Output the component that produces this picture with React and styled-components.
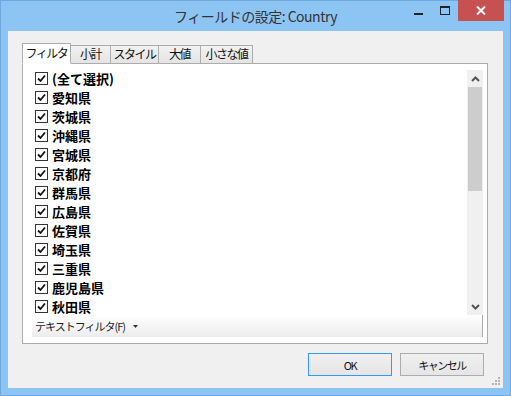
import React from 'react';
import styled, { createGlobalStyle } from 'styled-components';

const GlobalStyle = createGlobalStyle`
  html, body {
    margin: 0;
    padding: 0;
    background: #8cc4f4;
  }
  body {
    font-family: "Noto Sans CJK JP", "Noto Sans", sans-serif;
  }
`;

const Window = styled.div`
  width: 511px;
  height: 396px;
  box-sizing: border-box;
  border: 1px solid #6fa8dc;
  background: #8cc4f4;
  padding: 0 7px 7px;
  display: flex;
  flex-direction: column;
`;

const TitleBar = styled.div`
  height: 30px;
  display: grid;
  grid-template-columns: 1fr auto 1fr;
  align-items: center;
`;

const Title = styled.div`
  grid-column: 2;
  font-size: 14px;
  letter-spacing: -0.5px;
  color: #333;
  padding-bottom: 1px;
  white-space: nowrap;
`;

const Controls = styled.div`
  grid-column: 3;
  justify-self: end;
  align-self: start;
  display: flex;
  margin-right: -1px;
  margin-top: -1px;
`;

const CtrlButton = styled.div`
  width: ${p => p.$w}px;
  height: 21px;
  display: flex;
  align-items: center;
  justify-content: center;
  background: ${p => (p.$close ? '#c75050' : 'transparent')};
`;

const Client = styled.div`
  flex: 1;
  position: relative;
  background: #f0f0f0;
  padding: 12px 15px 0 14px;
  display: flex;
  flex-direction: column;
`;

const TabRow = styled.div`
  display: flex;
  align-items: flex-end;
  height: 21px;
  position: relative;
  z-index: 1;
  margin-bottom: -1px;
`;

const Tab = styled.div`
  box-sizing: border-box;
  width: ${p => p.$w}px;
  height: ${p => (p.$active ? 21 : 19)}px;
  margin-left: ${p => (p.$first ? 0 : -1)}px;
  border: 1px solid #acacac;
  border-bottom: ${p => (p.$active ? '1px solid #fff' : '1px solid #acacac')};
  background: ${p => (p.$active ? '#fff' : 'linear-gradient(#f2f2f2, #e4e4e4)')};
  font-size: 12px;
  letter-spacing: -1.5px;
  line-height: 1;
  color: #111;
  display: flex;
  align-items: center;
  justify-content: center;
  padding-bottom: 1px;
  position: relative;
  z-index: ${p => (p.$active ? 2 : 1)};
  white-space: nowrap;
`;

const Panel = styled.div`
  height: 281px;
  box-sizing: border-box;
  border: 1px solid #acacac;
  background: #fff;
  padding: 6px 4px 6px 9px;
  display: flex;
`;

const ListBox = styled.div`
  flex: 1;
  display: flex;
  flex-direction: column;
`;

const ListArea = styled.div`
  height: 245px;
  display: flex;
`;

const Items = styled.div`
  flex: 1;
  overflow: hidden;
  padding: 0 0 0 3px;
  margin-top: -1px;
`;

const Row = styled.div`
  height: 19px;
  display: flex;
  align-items: center;
  gap: 4px;
`;

const Box = styled.div`
  width: 13px;
  height: 13px;
  box-sizing: border-box;
  border: 1px solid #333;
  background: #fff;
  display: flex;
  align-items: center;
  justify-content: center;
`;

const Label = styled.span`
  font-size: 13px;
  font-weight: 700;
  color: #000;
  line-height: 1;
`;

const Scrollbar = styled.div`
  width: 16px;
  background: #f0f0f0;
  display: flex;
  flex-direction: column;
`;

const ArrowBtn = styled.div`
  height: 17px;
  display: flex;
  align-items: center;
  justify-content: center;
`;

const Thumb = styled.div`
  height: 104px;
  margin: 0 1px;
  background: #cdcdcd;
`;

const Track = styled.div`
  flex: 1;
`;

const Footer = styled.div`
  flex: 1;
  box-sizing: border-box;
  background: linear-gradient(#ffffff, #ececec);
  border-right: 1px solid #a8a8a8;
  display: flex;
  align-items: center;
  gap: 8px;
  padding-left: 3px;
  font-size: 11px;
  letter-spacing: -1px;
  color: #1e1e1e;
`;

const ButtonRow = styled.div`
  display: flex;
  justify-content: flex-end;
  gap: 8px;
  padding: 9px 4px 0 0;
`;

const Button = styled.div`
  width: 84px;
  height: 23px;
  box-sizing: border-box;
  border: 1px solid ${p => (p.$default ? '#3399ff' : '#acacac')};
  background: linear-gradient(#f0f0f0, #e5e5e5);
  font-size: 11px;
  letter-spacing: -1.5px;
  color: #111;
  display: flex;
  align-items: center;
  justify-content: center;
`;

const Grip = styled.svg`
  position: absolute;
  right: 3px;
  bottom: 3px;
`;

const items = [
  '(全て選択)', '愛知県', '茨城県', '沖縄県', '宮城県', '京都府', '群馬県',
  '広島県', '佐賀県', '埼玉県', '三重県', '鹿児島県', '秋田県',
];

const tabs = [
  { label: 'フィルタ', w: 49 },
  { label: '小計', w: 41 },
  { label: 'スタイル', w: 49 },
  { label: '大値', w: 43 },
  { label: '小さな値', w: 53 },
];

const Check = () => (
  <Box>
    <svg width="9" height="9" viewBox="0 0 9 9">
      <path d="M1 4.5 L3.5 7 L8 1.5" fill="none" stroke="#111" strokeWidth="1.8" />
    </svg>
  </Box>
);

const App = () => {
  return (
    <>
      <GlobalStyle />
      <Window>
        <TitleBar>
          <Title>フィールドの設定: Country</Title>
          <Controls>
            <CtrlButton $w={26}>
              <svg width="9" height="10" viewBox="0 0 9 10">
                <rect x="0" y="7" width="9" height="2" fill="#222" />
              </svg>
            </CtrlButton>
            <CtrlButton $w={27}>
              <svg width="10" height="9" viewBox="0 0 10 9">
                <rect x="0.5" y="0.5" width="9" height="8" fill="none" stroke="#222" />
                <rect x="0" y="0" width="10" height="2" fill="#222" />
              </svg>
            </CtrlButton>
            <CtrlButton $w={46} $close>
              <svg width="10" height="9" viewBox="0 0 10 9">
                <path d="M1 0.5 L9 8.5 M9 0.5 L1 8.5" stroke="#fff" strokeWidth="2" />
              </svg>
            </CtrlButton>
          </Controls>
        </TitleBar>
        <Client>
          <TabRow>
            {tabs.map((t, i) => (
              <Tab key={t.label} $w={t.w} $active={i === 0} $first={i === 0}>
                {t.label}
              </Tab>
            ))}
          </TabRow>
          <Panel>
            <ListBox>
              <ListArea>
                <Items>
                  {items.map(name => (
                    <Row key={name}>
                      <Check />
                      <Label>{name}</Label>
                    </Row>
                  ))}
                </Items>
                <Scrollbar>
                  <ArrowBtn>
                    <svg width="9" height="6" viewBox="0 0 9 6">
                      <path d="M1 5 L4.5 1.5 L8 5" fill="none" stroke="#555" strokeWidth="2" />
                    </svg>
                  </ArrowBtn>
                  <Thumb />
                  <Track />
                  <ArrowBtn>
                    <svg width="9" height="6" viewBox="0 0 9 6">
                      <path d="M1 1 L4.5 4.5 L8 1" fill="none" stroke="#555" strokeWidth="2" />
                    </svg>
                  </ArrowBtn>
                </Scrollbar>
              </ListArea>
              <Footer>
                テキストフィルタ(F)
                <svg width="5" height="3" viewBox="0 0 5 3">
                  <path d="M0 0 L5 0 L2.5 3 Z" fill="#333" />
                </svg>
              </Footer>
            </ListBox>
          </Panel>
          <ButtonRow>
            <Button $default>OK</Button>
            <Button>キャンセル</Button>
          </ButtonRow>
          <Grip width="8" height="8" viewBox="0 0 8 8">
            <rect x="6" y="0" width="2" height="2" fill="#b5b5b5" />
            <rect x="3" y="3" width="2" height="2" fill="#b5b5b5" />
            <rect x="6" y="3" width="2" height="2" fill="#b5b5b5" />
            <rect x="0" y="6" width="2" height="2" fill="#b5b5b5" />
            <rect x="3" y="6" width="2" height="2" fill="#b5b5b5" />
            <rect x="6" y="6" width="2" height="2" fill="#b5b5b5" />
          </Grip>
        </Client>
      </Window>
    </>
  );
};

export default App;
